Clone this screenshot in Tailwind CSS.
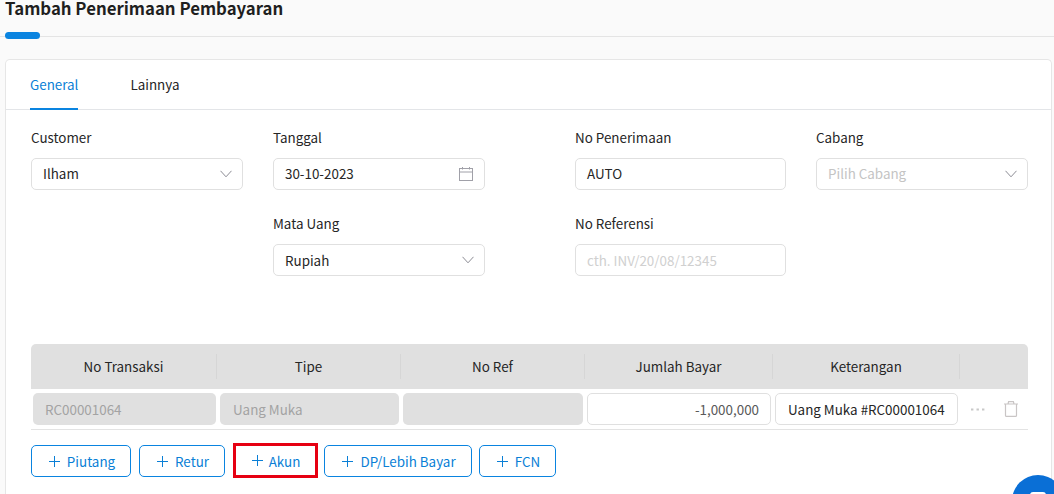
<!DOCTYPE html>
<html><head><meta charset="utf-8"><script src="https://cdn.jsdelivr.net/npm/@tailwindcss/browser@4"></script></head>
<body class="w-[1054px] h-[494px] overflow-hidden relative bg-[#fafafa] text-[13.4px] text-[#262626] font-['Noto_Sans_CJK_SC','Noto_Sans',sans-serif]">
<div class="h-[59px]">
  <h1 class="h-[32px] pl-[5px] text-[16.8px] leading-[16px] font-bold text-[#1f1f1f]">Tambah Penerimaan Pembayaran</h1>
  <div class="relative h-[5px] border-b border-[#e4e4e4]">
    <div class="absolute left-[5px] top-0 w-[35px] h-[7px] rounded-full bg-[#0a84e0]"></div>
  </div>
</div>
<main class="ml-[5px] w-[1047px] h-[435px] bg-white border border-b-0 border-[#e6e6e6] rounded-t-[5px]">
  <nav class="flex h-[50px] pl-[24px] gap-[52px] border-b border-[#e3e5e8]">
    <div class="h-[50px] leading-[48px] border-b-2 border-[#0a84e0] text-[#0a7fd6]">General</div>
    <div class="h-[50px] leading-[48px]">Lainnya</div>
  </nav>
  <section class="pl-[25px] pt-[17px] grid grid-cols-[242px_302px_241px_212px] grid-rows-[66px_68px] gap-y-[20px]">
    <div>
      <div class="h-[20px] leading-[20px] mb-[11px]">Customer</div>
      <div class="w-[212px] h-[32px] border border-[#e0e0e0] rounded-[5px] pl-[11px] pr-[10px] flex items-center justify-between"><span class="-mt-[2px]">Ilham</span>
      <svg width="12" height="8" viewBox="0 0 12 8" fill="none" stroke="#8c8c94" stroke-width="1"><path d="M.5.8 6 6.8 11.5.8"/></svg></div>
    </div>
    <div>
      <div class="h-[20px] leading-[20px] mb-[11px]">Tanggal</div>
      <div class="w-[212px] h-[32px] border border-[#e0e0e0] rounded-[5px] pl-[11px] pr-[11px] flex items-center justify-between"><span class="-mt-[2px]">30-10-2023</span>
      <svg width="14" height="14" viewBox="0 0 14 14" fill="none" stroke="#a0a0a8" stroke-width="1"><rect x=".5" y="1.5" width="13" height="12"/><path d="M.5 5h13M3.5 0v2.5M10.5 0v2.5"/></svg></div>
    </div>
    <div>
      <div class="h-[20px] leading-[20px] mb-[11px]">No Penerimaan</div>
      <div class="w-[211px] h-[32px] border border-[#e0e0e0] rounded-[5px] px-[11px] flex items-center"><span class="-mt-[2px]">AUTO</span></div>
    </div>
    <div>
      <div class="h-[20px] leading-[20px] mb-[11px]">Cabang</div>
      <div class="w-[212px] h-[32px] border border-[#e0e0e0] rounded-[5px] pl-[11px] pr-[10px] flex items-center justify-between"><span class="-mt-[2px] text-[#c4c4c4]">Pilih Cabang</span>
      <svg width="12" height="8" viewBox="0 0 12 8" fill="none" stroke="#8c8c94" stroke-width="1"><path d="M.5.8 6 6.8 11.5.8"/></svg></div>
    </div>
    <div></div>
    <div>
      <div class="h-[20px] leading-[20px] mb-[11px]">Mata Uang</div>
      <div class="w-[212px] h-[32px] border border-[#e0e0e0] rounded-[5px] pl-[11px] pr-[10px] flex items-center justify-between"><span>Rupiah</span>
      <svg width="12" height="8" viewBox="0 0 12 8" fill="none" stroke="#8c8c94" stroke-width="1"><path d="M.5.8 6 6.8 11.5.8"/></svg></div>
    </div>
    <div>
      <div class="h-[20px] leading-[20px] mb-[11px]">No Referensi</div>
      <div class="w-[211px] h-[32px] border border-[#e0e0e0] rounded-[5px] px-[11px] flex items-center text-[#d0d0d0]">cth. INV/20/08/12345</div>
    </div>
  </section>
  <section class="ml-[25px] mt-[63px] w-[997px]">
    <div class="h-[45px] bg-[#e0e0e0] rounded-t-[5px] grid grid-cols-[186px_184px_184px_188px_187px_68px] items-center text-center">
      <div class="h-[25px] leading-[24px] border-r border-[#d6d6d6]">No Transaksi</div>
      <div class="h-[25px] leading-[24px] border-r border-[#d6d6d6]">Tipe</div>
      <div class="h-[25px] leading-[24px] border-r border-[#d6d6d6]">No Ref</div>
      <div class="h-[25px] leading-[24px] border-r border-[#d6d6d6]">Jumlah Bayar</div>
      <div class="h-[25px] leading-[24px] border-r border-[#d6d6d6]">Keterangan</div>
      <div></div>
    </div>
    <div class="h-[41px] border-b border-[#e3e3e3] flex items-start pt-[4px] pl-[2px]">
      <div class="w-[183px] h-[32px] rounded-[5px] bg-[#e0e0e0] pl-[12px] leading-[32px] text-[#a3a3a3]">RC00001064</div>
      <div class="ml-[4px] w-[179px] h-[32px] rounded-[5px] bg-[#e0e0e0] pl-[13px] leading-[32px] text-[#a3a3a3]">Uang Muka</div>
      <div class="ml-[4px] w-[180px] h-[32px] rounded-[5px] bg-[#e0e0e0]"></div>
      <div class="ml-[4px] w-[184px] h-[32px] rounded-[5px] bg-white border border-[#e0e0e0] pr-[11px] leading-[30px] text-right text-[#595959]">-1,000,000</div>
      <div class="ml-[4px] w-[183px] h-[32px] rounded-[5px] bg-white border border-[#e0e0e0] pl-[12px] leading-[30px] whitespace-nowrap">Uang Muka #RC00001064</div>
      <svg class="ml-[13px] mt-[15px]" width="14" height="3" viewBox="0 0 14 3" fill="#c8c8c8"><rect y=".5" width="2.4" height="2"/><rect x="5.5" y=".5" width="2.4" height="2"/><rect x="11" y=".5" width="2.4" height="2"/></svg>
      <svg class="ml-[19px] mt-[8px]" width="14" height="16" viewBox="0 0 14 16" fill="none" stroke="#c9c5c5" stroke-width="1.2"><path d="M0 3h14M4 3l.6-2.3h4.8L10 3M1.5 3v11.4a1 1 0 0 0 1 1h9a1 1 0 0 0 1-1V3"/></svg>
    </div>
    <div class="flex mt-[15px] text-[#0a7fd6] leading-[30px]">
      <button class="w-[100px] h-[32px] pl-[2px] border border-[#0a84e0] rounded-[5px] flex items-center justify-center gap-[7px]"><svg width="11" height="11" viewBox="0 0 11 11" stroke="currentColor"><path d="M0 5.5h11M5.5 0v11"/></svg>Piutang</button>
      <button class="ml-[8px] w-[86px] h-[32px] pl-[2px] border border-[#0a84e0] rounded-[5px] flex items-center justify-center gap-[7px]"><svg width="11" height="11" viewBox="0 0 11 11" stroke="currentColor"><path d="M0 5.5h11M5.5 0v11"/></svg>Retur</button>
      <button class="ml-[8px] w-[85px] h-[35px] -mt-[2px] pl-[1px] border-[3px] border-[#e60012] flex items-center justify-center gap-[6px]"><svg width="11" height="11" viewBox="0 0 11 11" stroke="currentColor"><path d="M0 5.5h11M5.5 0v11"/></svg>Akun</button>
      <button class="ml-[6px] w-[148px] h-[32px] pl-[2px] border border-[#0a84e0] rounded-[5px] flex items-center justify-center gap-[7px]"><svg width="11" height="11" viewBox="0 0 11 11" stroke="currentColor"><path d="M0 5.5h11M5.5 0v11"/></svg>DP/Lebih Bayar</button>
      <button class="ml-[7px] w-[77px] h-[32px] pl-[2px] border border-[#0a84e0] rounded-[5px] flex items-center justify-center gap-[7px]"><svg width="11" height="11" viewBox="0 0 11 11" stroke="currentColor"><path d="M0 5.5h11M5.5 0v11"/></svg>FCN</button>
    </div>
  </section>
</main>
<div class="absolute left-[1012px] top-[475px] w-[52px] h-[52px] rounded-full bg-[#0a6fd6]">
  <div class="absolute left-[18px] top-[17px] w-[16px] h-[14px] rounded-[3px] bg-white"></div>
</div>
</body></html>
